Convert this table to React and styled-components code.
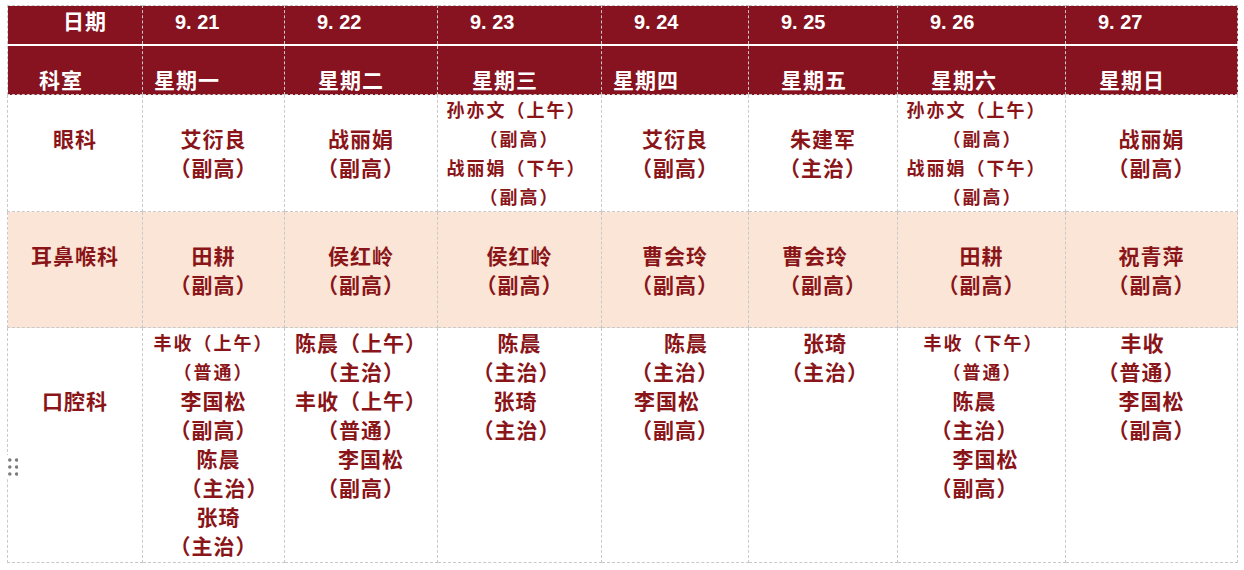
import styled, { createGlobalStyle } from 'styled-components'

const GlobalStyle = createGlobalStyle`
  body {
    margin: 0;
    background: #fff;
    font-family: "Noto Sans CJK SC", "Noto Sans", sans-serif;
  }
`

const Page = styled.div`
  position: relative;
  padding: 5px 0 0 7px;
`

const Table = styled.table`
  border-collapse: collapse;
  table-layout: fixed;
  width: 1231px;
`

const HeadRow = styled.tr`
  background: #86131f;
  height: ${(p) => p.$h}px;
`

const HeadCell = styled.th`
  border: 1px dashed #c9c9c9;
  border-bottom: ${(p) => (p.$rule ? '2px solid #fff' : '1px dashed #c9c9c9')};
  padding: 0 0 0 ${(p) => p.$indent}px;
  text-align: left;
  vertical-align: ${(p) => (p.$rule ? 'top' : 'bottom')};
  color: #fff;
  font-size: 21px;
  letter-spacing: 1px;
  line-height: 29px;
  font-weight: 700;
  white-space: pre;
`

const DateText = styled.span`
  font-family: "Liberation Sans", Arial, sans-serif;
  font-size: 20px;
  letter-spacing: 0;
`

const BodyRow = styled.tr`
  background: ${(p) => (p.$tint ? '#fbe5d6' : '#fff')};
  height: ${(p) => p.$h}px;
`

const DeptCell = styled.td`
  border: 1px dashed #c9c9c9;
  padding: 0 0 ${(p) => p.$lift}px;
  text-align: center;
  vertical-align: middle;
  color: #8a1519;
  font-size: 21px;
  letter-spacing: 1px;
  line-height: 29px;
  font-weight: 700;
`

const DayCell = styled.td`
  border: 1px dashed #c9c9c9;
  padding: 0;
  vertical-align: ${(p) => (p.$top ? 'top' : 'middle')};
`

const Line = styled.div`
  color: #8a1519;
  font-weight: 700;
  font-size: ${(p) => (p.$small ? 18 : 21)}px;
  letter-spacing: ${(p) => (p.$small ? 2 : 1)}px;
  line-height: 29px;
  text-align: center;
  white-space: nowrap;
  padding-left: ${(p) => (p.$dx > 0 ? p.$dx * 2 : 0)}px;
  padding-right: ${(p) => (p.$dx < 0 ? -p.$dx * 2 : 0)}px;
`

const Handle = styled.div`
  position: absolute;
  left: 6px;
  top: 455px;
  width: 13px;
  height: 24px;
  background: #fff;
  display: flex;
  align-items: center;
  justify-content: center;
`

const widths = [135, 142, 153, 164, 147, 149, 168, 172]

const days = [
  { date: '9. 21', week: '星期一', wIndent: 11 },
  { date: '9. 22', week: '星期二', wIndent: 33 },
  { date: '9. 23', week: '星期三', wIndent: 34 },
  { date: '9. 24', week: '星期四', wIndent: 11 },
  { date: '9. 25', week: '星期五', wIndent: 32 },
  { date: '9. 26', week: '星期六', wIndent: 33 },
  { date: '9. 27', week: '星期日', wIndent: 33 },
]

// n: normal line, s: small line; dx nudges the line sideways
const n = (t, dx = 0) => ({ t, dx })
const s = (t, dx = 0) => ({ t, dx, small: true })

const rows = [
  {
    dept: '眼科',
    h: 117,
    lift: 29,
    cells: [
      [n('艾衍良'), n('（副高）')],
      [n('战丽娟'), n('（副高）')],
      [s('孙亦文（上午）', -3), s('（副高）'), s('战丽娟（下午）', -3), s('（副高）')],
      [n('艾衍良'), n('（副高）')],
      [n('朱建军'), n('（主治）')],
      [s('孙亦文（上午）', -5), s('（副高）', 1), s('战丽娟（下午）', -5), s('（副高）', 1)],
      [n('战丽娟'), n('（副高）')],
    ],
  },
  {
    dept: '耳鼻喉科',
    h: 116,
    lift: 29,
    tint: true,
    cells: [
      [n('田耕'), n('（副高）')],
      [n('侯红岭'), n('（副高）')],
      [n('侯红岭'), n('（副高）')],
      [n('曹会玲'), n('（副高）')],
      [n('曹会玲', -8), n('（副高）')],
      [n('田耕'), n('（副高）')],
      [n('祝青萍'), n('（副高）')],
    ],
  },
  {
    dept: '口腔科',
    h: 235,
    lift: 90,
    top: true,
    cells: [
      [s('丰收（上午）'), s('（普通）'), n('李国松'), n('（副高）'), n('陈晨', 5), n('（主治）', 11), n('张琦', 5), n('（主治）')],
      [n('陈晨（上午）'), n('（主治）'), n('丰收（上午）'), n('（普通）'), n('李国松', 10), n('（副高）')],
      [n('陈晨'), n('（主治）', -3), n('张琦', -4), n('（主治）', -3)],
      [n('陈晨', 11), n('（主治）'), n('李国松', -8), n('（副高）')],
      [n('张琦', 2), n('（主治）', 2)],
      [s('丰收（下午）', 2), s('（普通）', 1), n('陈晨', -7), n('（主治）', -7), n('李国松', 4), n('（副高）', -7)],
      [n('丰收', -9), n('（普通）', -10), n('李国松'), n('（副高）')],
    ],
  },
]

const DragDots = () => (
  <svg width="10" height="18" viewBox="0 0 10 18">
    {[2, 9, 16].map((y) =>
      [1.8, 8.6].map((x) => <circle key={`${x}-${y}`} cx={x} cy={y} r="1.8" fill="#7d7d7d" />)
    )}
  </svg>
)

const App = () => {
  return (
    <Page>
      <GlobalStyle />
      <Table>
        <colgroup>
          {widths.map((w, i) => (
            <col key={i} style={{ width: w }} />
          ))}
        </colgroup>
        <thead>
          <HeadRow $h={39}>
            <HeadCell $rule $indent={55}>日期</HeadCell>
            {days.map((d) => (
              <HeadCell key={d.date} $rule $indent={32}>
                <DateText>{d.date}</DateText>
              </HeadCell>
            ))}
          </HeadRow>
          <HeadRow $h={50}>
            <HeadCell $indent={31}>科室</HeadCell>
            {days.map((d) => (
              <HeadCell key={d.week} $indent={d.wIndent}>
                {d.week}
              </HeadCell>
            ))}
          </HeadRow>
        </thead>
        <tbody>
          {rows.map((r) => (
            <BodyRow key={r.dept} $h={r.h} $tint={r.tint}>
              <DeptCell $lift={r.lift}>{r.dept}</DeptCell>
              {r.cells.map((lines, i) => (
                <DayCell key={i} $top={r.top}>
                  {lines.map((l, j) => (
                    <Line key={j} $small={l.small} $dx={l.dx}>
                      {l.t}
                    </Line>
                  ))}
                </DayCell>
              ))}
            </BodyRow>
          ))}
        </tbody>
      </Table>
      <Handle>
        <DragDots />
      </Handle>
    </Page>
  )
}

export default App
